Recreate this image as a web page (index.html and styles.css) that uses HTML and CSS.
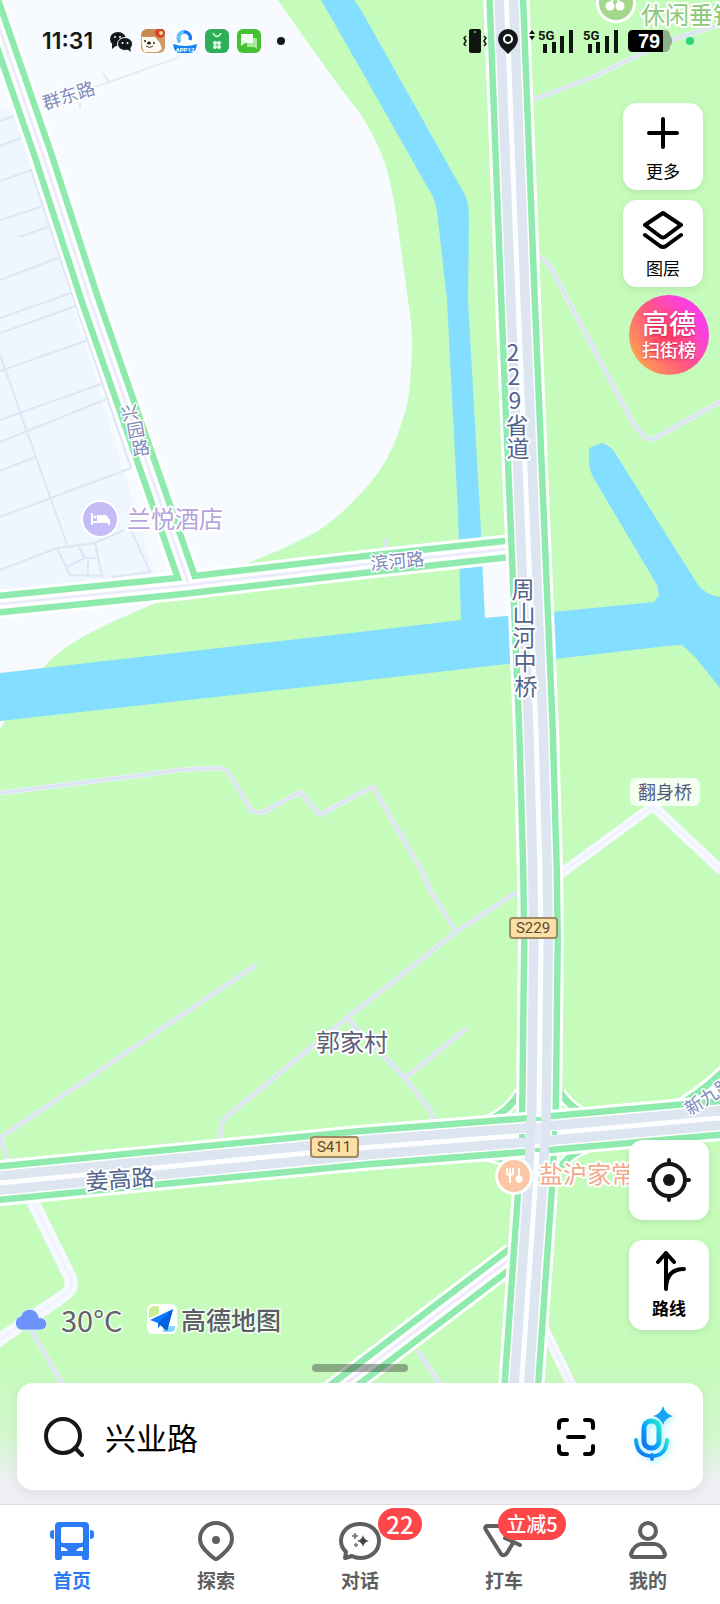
FILE: index.html
```html
<!DOCTYPE html>
<html lang="zh-CN">
<head>
<meta charset="utf-8">
<meta name="viewport" content="width=device-width, initial-scale=1">
<title>高德地图</title>
<link rel="stylesheet" href="styles.css">
</head>
<body>
<div class="screen">
  <main class="map-view">
    <svg class="map" viewBox="0 0 720 1504" preserveAspectRatio="xMidYMin slice" role="img" aria-label="地图">
      <defs>
        <path id="r229" d="M506 -10 L518 300 L536 730 L540 870 L541 940 L539 1110 L535 1190 L521 1390 L518 1510"/>
        <path id="r411" d="M-10 1184 L360 1148 L540 1134 L730 1117"/>
        <path id="rxy" d="M-14 -10 L43 155 L90 300 L188 582"/>
        <path id="rbh" d="M-10 605 L180 586 L360 565 L507 549"/>
        <path id="rsw" d="M514 1256 L360 1373 L290 1426"/>
        <path id="rxj" d="M672 1118 Q704 1102 732 1074"/>
      </defs>
      <rect width="720" height="1504" class="land"/>
      <path class="town" d="M0 0H278Q336 84 360 113Q376 138 385 163Q393 190 397 220L408 300Q413 330 412 352Q410 400 404 415Q395 448 380 470Q368 487 356 498Q340 516 318 531Q285 549 250 562L163 600Q110 622 90 633Q58 650 43 668L0 674Z"/>
      <path class="town" d="M0 715H8L0 730ZM482 562H508V616L485 618Z"/>
      <path class="block" d="M0 110L14 112L155 574L0 592Z"/>
      <g class="lanes">
        <path d="M0 121L14 116M0 146L21 138M0 181L31 170L43 207L74 300L131 468M0 220L41 207M19 237L48 227M0 280L58 258M0 318L71 293M0 333L76 306M0 371L88 340M0 420L104 383M0 442L109 398M0 471L35 457M0 517L131 468M0 355L67 545M0 570L57 548L95 543L124 530M131 530L150 572L112 577M57 548L70 575L102 576L95 543M78 546L85 558H95M85 558L66 567M88 560V576"/>
        <path class="faint" d="M95 87L115 80L180 57M103 73L108 81M80 103V109"/>
      </g>
      <g class="water">
        <path d="M321 0H354L360 8L465 195Q469 204 469 217L468 300L480 513L485 622H461L458 513L447 300L438 220Q437 206 433 197L360 68Z"/>
        <path d="M0 673L360 632L461 620L553 612L654 602L659 595L657 585L593 477Q589 468 589 462V448L602 443Q611 446 615 453L698 585Q706 594 715 596L720 597V688L695 657L682 645L667 646L555 659L507 664L360 681L0 721Z"/>
      </g>
      <g class="path-case">
        <path d="M0 793L127 777L180 770L215 768Q225 768 228 772L251 810Q253 813 264 812L300 792L320 815L360 793L373 787L423 873L430 890L456 932"/>
        <path d="M517 892L456 932L347 1018L225 1118Q220 1124 220 1140M349 1020L405 1078L430 1110L434 1122M405 1078L467 1028"/>
        <path d="M256 965L0 1138L8 1160"/>
        <path d="M530 101L593 77L643 53L680 37L722 24"/>
        <path d="M538 256Q548 262 552 270L568 300L633 423L645 438Q648 440 655 438L722 401"/>
        <path d="M31 1330L66 1390M417 1350L444 1390"/>
      </g>
      <g class="path-line">
        <path d="M0 793L127 777L180 770L215 768Q225 768 228 772L251 810Q253 813 264 812L300 792L320 815L360 793L373 787L423 873L430 890L456 932"/>
        <path d="M517 892L456 932L347 1018L225 1118Q220 1124 220 1140M349 1020L405 1078L430 1110L434 1122M405 1078L467 1028"/>
        <path d="M256 965L0 1138L8 1160"/>
        <path d="M530 101L593 77L643 53L680 37L722 24"/>
        <path d="M538 256Q548 262 552 270L568 300L633 423L645 438Q648 440 655 438L722 401"/>
        <path d="M31 1330L66 1390M417 1350L444 1390"/>
      </g>
      <g class="street">
        <path d="M560 874L653 806L722 871M540 1320L574 1390"/>
        <path class="street-wide" d="M30 1196L70 1277Q74 1287 66 1294L-4 1342"/>
      </g>
      <g class="street-mid">
        <path d="M560 874L653 806L722 871M540 1320L574 1390M30 1196L70 1277Q74 1287 66 1294L-4 1342"/>
      </g>
      <path d="M385 538v12" class="tick"/>
      <g class="ramp-case"><path d="M480 1123Q506 1116 520 1092M560 1092Q572 1112 598 1118M598 1144Q572 1150 560 1168M480 1154Q500 1158 515 1164"/></g>
      <g class="ramp"><path d="M480 1123Q506 1116 520 1092M560 1092Q572 1112 598 1118M598 1144Q572 1150 560 1168M480 1154Q500 1158 515 1164"/></g>
      <g class="mid-road">
        <use href="#rsw" class="w1"/><use href="#rsw" class="w2"/><use href="#rsw" class="w3"/><use href="#rsw" class="w4"/>
        <use href="#rxj" class="w1"/><use href="#rxj" class="w2"/><use href="#rxj" class="w3"/>
        <use href="#rbh" class="w1"/><use href="#rxy" class="w1"/>
        <use href="#rbh" class="w2"/><use href="#rxy" class="w2"/>
        <use href="#rbh" class="w3"/><use href="#rxy" class="w3"/>
        <use href="#rbh" class="w4"/><use href="#rxy" class="w4"/>
      </g>
      <g class="big-road">
        <use href="#r229" class="b1"/><use href="#r229" class="b2"/><use href="#r229" class="b3"/>
        <use href="#r411" class="b1"/><use href="#r411" class="b2"/><use href="#r411" class="b3"/>
        <use href="#r411" class="b4"/><use href="#r411" class="b5"/>
        <use href="#r229" class="b4"/><use href="#r229" class="b5"/>
        <path class="cross" d="M538 1123V1144"/>
        <path class="patch" d="M519 1136H525M552 1133H557M536 1119H541M535 1150H540"/>
      </g>

      <g class="label road-label">
        <text transform="translate(45 110) rotate(-18)">群东路</text>
        <text x="122 128 133" y="421 438 456" rotate="-10">兴园路</text>
        <text transform="translate(371 570) rotate(-5)">滨河路</text>
        <text transform="translate(690 1116) rotate(-33)">新九路</text>
      </g>
      <g class="label main-label">
        <text text-anchor="middle" x="513 514 515 517 518" y="361 385 409 434 457">229省道</text>
        <text text-anchor="middle" x="523 524 524 525 526" y="598 622 646 670 695">周山河中桥</text>
        <text transform="translate(86 1190) rotate(-4)">姜高路</text>
      </g>
      <g class="label poi-label">
        <text class="hotel" x="127" y="528">兰悦酒店</text>
        <text class="food" x="539" y="1183">盐沪家常菜</text>
        <text class="park" x="641" y="24">休闲垂钓</text>
        <text class="village" x="316" y="1051">郭家村</text>
      </g>
      <rect x="630" y="778" width="70" height="28" rx="6" class="tag"/>
      <text x="665" y="799" text-anchor="middle" class="tag-text">翻身桥</text>
      <g class="shield">
        <rect x="510" y="918" width="47" height="20" rx="3"/><text x="533" y="933" text-anchor="middle">S229</text>
        <rect x="311" y="1137" width="47" height="20" rx="3"/><text x="334" y="1152" text-anchor="middle">S411</text>
      </g>
      <g>
        <circle cx="100" cy="519" r="19" fill="#fff"/><circle cx="100" cy="519" r="17" fill="#c3bcf6"/>
        <path d="M92 513V525M92 522H109V525M109 522V519" stroke="#fff" stroke-width="2" fill="none"/>
        <path d="M97 515H105Q109 516 109 521H97Z" fill="#fff"/><circle cx="95" cy="517" r="1.500" fill="#fff"/>
        <circle cx="514" cy="1176" r="19" fill="#fff"/><circle cx="514" cy="1176" r="16" fill="#fbc7a4"/>
        <path d="M507 1168V1173Q507 1175 510 1175Q513 1175 513 1173V1168M510 1168V1183M519 1168V1183" stroke="#fff" stroke-width="2" fill="none"/>
        <circle cx="519" cy="1179" r="3.500" fill="#fff"/>
        <circle cx="616" cy="3" r="20" fill="#fff"/><circle cx="616" cy="3" r="17" fill="#a3d78c"/>
        <circle cx="610" cy="6" r="4.500" fill="#fff"/><circle cx="620" cy="6" r="4.500" fill="#fff"/>
        <path d="M611 3L615 -4L620 3" stroke="#fff" stroke-width="2" fill="none"/>
      </g>
    </svg>
    <div class="map-fade"></div>

    <header class="status">
      <div class="status-left">
        <time class="clock">11:31</time>
        <div class="notices">
          <svg width="24" height="24" viewBox="0 0 24 24"><ellipse cx="9" cy="10" rx="8" ry="7" fill="#15181b"/><path d="M3 15L3 20L8 16Z" fill="#15181b"/><ellipse cx="16" cy="15" rx="7.500" ry="6.500" fill="#15181b" stroke="#f6faff"/><path d="M18 20L22 23L21 18Z" fill="#15181b"/><circle cx="6" cy="8" r="1" fill="#fff"/><circle cx="11" cy="8" r="1" fill="#fff"/><circle cx="13.500" cy="14" r="1" fill="#fff"/><circle cx="18.500" cy="14" r="1" fill="#fff"/></svg>
          <svg width="24" height="24" viewBox="0 0 24 24"><rect width="24" height="24" rx="6" fill="#cf9a68"/><path d="M0 8H14L19 14L21 20L17 23H3Q0 16 1 9Z" fill="#fff9ef"/><path d="M1 8Q-1 2 6 0H15L14 7Z" fill="#c98a52"/><circle cx="19" cy="4" r="5" fill="#d8442c"/><circle cx="20" cy="4" r="2" fill="#f8d6a0"/><circle cx="4" cy="12" r="1" fill="#222"/><circle cx="13" cy="14" r="1" fill="#222"/><ellipse cx="8" cy="14" rx="2" ry="1.500" fill="#222"/><path d="M5 17Q9 20 12 17" stroke="#333" fill="none"/></svg>
          <svg width="24" height="24" viewBox="0 0 24 24"><rect width="24" height="24" rx="6" fill="#fff"/><path d="M7 13A6 6 0 1 1 17 11" fill="none" stroke="#1b7cf2" stroke-width="3.500"/><path d="M7 13A6 6 0 0 1 11 3" fill="none" stroke="#5fc4ff" stroke-width="3.500"/><path d="M0 15Q12 19 24 15Q23 24 17 24H7Q1 24 0 15Z" fill="#1583f3"/><text x="12" y="23" text-anchor="middle" class="tiny">APP12</text></svg>
          <svg width="24" height="24" viewBox="0 0 24 24"><rect width="24" height="24" rx="6" fill="#2fae58"/><path d="M8 4Q12 11 16 4" stroke="#d9ffe0" stroke-width="1.500" fill="none"/><g fill="#e4ffe9"><circle cx="10" cy="14" r="2"/><circle cx="14" cy="14" r="2"/><circle cx="10" cy="18" r="2"/><circle cx="14" cy="18" r="2"/></g></svg>
          <svg width="24" height="24" viewBox="0 0 24 24"><rect width="24" height="24" rx="6" fill="#45c232"/><path d="M10 9H20V20L17 18H10Z" fill="#a9e79c"/><path d="M4 5H16V14H8L4 17Z" fill="#f0fff0"/></svg>
        </div>
        <span class="dot dark"></span>
      </div>
      <div class="status-right">
        <svg width="24" height="24" viewBox="0 0 24 24"><rect x="6" y="0" width="12" height="24" rx="2" fill="#10150f"/><circle cx="12" cy="3" r="1" fill="#9c9"/><path d="M3 7L1 9L3 12L1 15L3 17M21 7L23 9L21 12L23 15L21 17" stroke="#10150f" stroke-width="1.500" fill="none"/></svg>
        <svg width="22" height="26" viewBox="0 0 22 26"><path d="M11 26L4 19Q1 15 1 11A10 10 0 0 1 21 11Q21 15 18 19Z" fill="#15181b"/><circle cx="11" cy="11" r="4" fill="none" stroke="#fff" stroke-width="2"/></svg>
        <svg width="44" height="26" viewBox="0 0 44 26"><path d="M0 6L3 2L6 6ZM0 8L3 12L6 8Z" fill="#10150f"/><text x="9" y="12" class="net">5G</text><path d="M16 16V25M25 14V25M33 8V25M42 2V25" stroke="#10150f" stroke-width="4"/></svg>
        <svg width="35" height="26" viewBox="0 0 35 26"><text x="0" y="12" class="net">5G</text><path d="M7 16V25M15 14V25M24 8V25M33 2V25" stroke="#10150f" stroke-width="4"/></svg>
        <svg width="44" height="24" viewBox="0 0 44 24"><path d="M34 1H37Q42 1 42 7Q44 8 44 12Q44 16 42 17Q42 23 37 23H34Z" fill="#8fae8a"/><path d="M5 1H35V23H5Q0 23 0 18V6Q0 1 5 1Z" fill="#000"/><text x="21" y="19" text-anchor="middle" class="charge">79</text></svg>
        <span class="dot green"></span>
      </div>
    </header>

    <div class="tools">
      <button class="tool" type="button">
        <svg width="40" height="40" viewBox="0 0 40 40"><path d="M20 6V34M6 20H34" stroke="#000" stroke-width="4" stroke-linecap="round"/></svg>
        <span>更多</span>
      </button>
      <button class="tool" type="button">
        <svg width="40" height="40" viewBox="0 0 40 40" fill="none" stroke="#000" stroke-width="4" stroke-linejoin="round" stroke-linecap="round"><path d="M20 3L38 15L22 27Q20 28 18 27L2 15Z"/><path d="M2 25L17 36Q20 38 23 36L38 25"/></svg>
        <span>图层</span>
      </button>
      <button class="rank" type="button"><span class="rank-top">高德</span><span class="rank-sub">扫街榜</span></button>
    </div>

    <div class="lower">
      <div class="info">
        <svg width="32" height="24" viewBox="0 0 32 24"><path d="M8 23A7 7 0 0 1 5 9A9 9 0 0 1 22 8Q23 9 23 11A6 6 0 0 1 26 23Z" fill="#6c92fb" stroke="#d9f0f0"/></svg>
        <span class="temp">30°C</span>
        <svg class="logo" width="30" height="30" viewBox="0 0 30 30"><rect width="30" height="30" rx="6" fill="#fff"/><path d="M2 8Q2 2 8 2H12V10L2 14Z" fill="#c8ee9a"/><path d="M16 22H28V24Q28 28 23 28H16Z" fill="#86d7ff"/><path d="M3 16L26 5L20 27L14 21L11 24V19Z" fill="#0a7cff"/><path d="M26 5L11 19L20 27Z" fill="#0560e0"/></svg>
        <span class="brand">高德地图</span>
      </div>
      <div class="actions">
        <button class="tool locate" type="button" aria-label="定位">
          <svg width="44" height="44" viewBox="0 0 44 44" fill="none" stroke="#15181b" stroke-width="4" stroke-linecap="round"><circle cx="22" cy="22" r="16"/><circle cx="22" cy="22" r="6" fill="#15181b" stroke="none"/><path d="M22 2V6M22 38V42M2 22H6M38 22H42"/></svg>
        </button>
        <button class="tool route" type="button">
          <svg width="40" height="42" viewBox="0 0 40 42" fill="none" stroke="#000" stroke-width="4" stroke-linecap="round" stroke-linejoin="round"><path d="M17 3V39M9 12L17 3L25 12M17 39Q17 19 35 19"/></svg>
          <span>路线</span>
        </button>
      </div>
    </div>
    <div class="handle"></div>
    <form class="search">
      <svg width="40" height="42" viewBox="0 0 40 42" fill="none" stroke="#15181b" stroke-width="4" stroke-linecap="round"><circle cx="19" cy="20" r="17"/><path d="M31 32L38 39"/></svg>
      <input type="text" aria-label="搜索地点" value="兴业路">
      <button class="icon-btn" type="button" aria-label="扫一扫">
        <svg width="38" height="38" viewBox="0 0 38 38" fill="none" stroke="#000" stroke-width="4" stroke-linecap="round"><path d="M2 10V6Q2 2 6 2H10M28 2H32Q36 2 36 6V10M36 28V32Q36 36 32 36H28M10 36H6Q2 36 2 32V28M11 19H27"/></svg>
      </button>
      <button class="icon-btn" type="button" aria-label="语音">
        <svg class="mic" width="42" height="56" viewBox="0 0 42 56"><defs><linearGradient id="mg" x1="0" y1="1" x2="1" y2="0"><stop offset="0" stop-color="#1766f0"/><stop offset=".5" stop-color="#0aaef8"/><stop offset="1" stop-color="#22e8d0"/></linearGradient></defs><rect x="11" y="15" width="15" height="27" rx="7" fill="none" stroke="url(#mg)" stroke-width="5"/><path d="M3 34Q4 50 19 50Q33 50 34 34" fill="none" stroke="url(#mg)" stroke-width="4" stroke-linecap="round"/><path d="M19 49V53" stroke="#138ff5" stroke-width="4" stroke-linecap="round"/><path d="M30 0Q32 8 40 10Q32 12 30 19Q28 12 20 10Q28 8 30 0Z" fill="#16a4f2"/></svg>
      </button>
    </form>
  </main>

  <nav class="tabs">
    <a href="#home" class="tab active">
      <svg width="44" height="40" viewBox="0 0 44 40"><path fill-rule="evenodd" fill="#2b7bf6" d="M9 1H35Q39 1 39 5V37Q39 39 37 39H34Q32 39 32 37V35H12V37Q12 39 10 39H7Q5 39 5 37V5Q5 1 9 1ZM13 6Q11 6 11 8V20Q11 22 13 22H31Q33 22 33 20V8Q33 6 31 6ZM11 26V30H18Q16 26 11 26ZM33 26V30H26Q28 26 33 26Z"/><path d="M4 9V18Q0 18 0 15V12Q0 9 4 9ZM40 9V18Q44 18 44 15V12Q44 9 40 9Z" fill="#2b7bf6"/></svg>
      <span>首页</span>
    </a>
    <a href="#explore" class="tab">
      <svg width="40" height="40" viewBox="0 0 40 40"><path d="M20 38Q18 38 12 32Q4 25 4 18A16 16 0 0 1 36 18Q36 25 28 32Q22 38 20 38Z" fill="none" stroke="#5f5f5f" stroke-width="4"/><circle cx="20" cy="19" r="4" fill="#5f5f5f"/></svg>
      <span>探索</span>
    </a>
    <a href="#chat" class="tab">
      <svg width="44" height="40" viewBox="0 0 44 40"><path d="M22 3C33 3 41 10 41 20S33 37 22 37Q18 37 14 35L7 37L8 31Q3 26 3 20C3 10 11 3 22 3Z" fill="none" stroke="#5f5f5f" stroke-width="4" stroke-linejoin="round"/><path d="M25 14Q26 19 31 20Q26 21 25 26Q24 21 19 20Q24 19 25 14Z" fill="#444"/><path d="M17 12Q17 15 20 15Q17 15 17 18Q17 15 14 15Q17 15 17 12ZM18 22Q18 24 20 24Q18 24 18 26Q18 24 16 24Q18 24 18 22Z" fill="#777" stroke="#777"/></svg>
      <span>对话</span><b class="badge count">22</b>
    </a>
    <a href="#taxi" class="tab">
      <svg width="44" height="40" viewBox="0 0 44 40" fill="none" stroke="#5f5f5f" stroke-width="4" stroke-linecap="round" stroke-linejoin="round"><path d="M33 5H5Q2 6 4 9L19 33Q22 36 25 32L31 22M23 17L38 24"/></svg>
      <span>打车</span><b class="badge promo">立减5</b>
    </a>
    <a href="#mine" class="tab">
      <svg width="40" height="40" viewBox="0 0 40 40" fill="none" stroke="#5f5f5f" stroke-width="4"><circle cx="20" cy="10" r="8"/><path d="M13 23H27Q34 24 37 33Q37 36 34 36H6Q3 36 3 33Q6 24 13 23Z"/></svg>
      <span>我的</span>
    </a>
  </nav>
</div>
</body>
</html>
```
FILE: styles.css
```css
* { box-sizing: border-box; }
body {
  margin: 0;
  font-family: "Noto Sans CJK SC", "Noto Sans", sans-serif;
  color: #15181b;
}
button { border: 0; padding: 0; font: inherit; color: inherit; cursor: pointer; }
svg { display: block; flex: none; }

.screen { min-height: 100vh; display: flex; flex-direction: column; background: #fff; }
.map-view { position: relative; flex: 1; display: flex; flex-direction: column; isolation: isolate; }
.map { position: absolute; inset: 0; width: 100%; height: 100%; z-index: -2; }
.map-fade {
  position: absolute; left: 0; right: 0; bottom: 0; height: 140px; z-index: -1;
  background: linear-gradient(rgba(241, 239, 243, 0), rgba(241, 239, 243, 0.3) 50%, #f1eff3 86%);
}

/* map surfaces */
.land { fill: #c5fbbb; }
.town { fill: #f7faff; }
.block { fill: #eef6ff; }
.water { fill: #84deff; }
.lanes { fill: none; stroke: #dde6f2; stroke-width: 2; }
.faint { stroke: #e6ebf3; }
.tick { stroke: #dde6f2; stroke-width: 4; }
.path-case { fill: none; stroke: #e6eef8; stroke-width: 5; stroke-linejoin: round; }
.path-line { fill: none; stroke: #dce5f0; stroke-width: 3; stroke-linejoin: round; }
.street { fill: none; stroke: #f5f8ff; stroke-width: 10; }
.street-wide { stroke-width: 13; }
.street-mid { fill: none; stroke: #ebe8fb; stroke-width: 1; }
.ramp-case { fill: none; stroke: #fff; stroke-width: 12; }
.ramp { fill: none; stroke: #8eebad; stroke-width: 7; }
.mid-road, .big-road { fill: none; }
.w1 { stroke: #fff; stroke-width: 29px; }
.w2 { stroke: #8eebad; stroke-width: 23px; }
.w3 { stroke: #fff; stroke-width: 10px; }
.w4 { stroke: #ececfa; stroke-width: 3px; }
.b1 { stroke: #fff; stroke-width: 46px; }
.b2 { stroke: #8eebad; stroke-width: 40px; }
.b3 { stroke: #fff; stroke-width: 27px; }
.b4 { stroke: #dde5f0; stroke-width: 24px; }
.b5 { stroke: #fbfdff; stroke-width: 5px; }
.cross { stroke: #e3eaf3; stroke-width: 6px; }
.patch { stroke: #8eebad; stroke-width: 4px; }

/* map labels */
.label { paint-order: stroke; stroke: #fff; stroke-width: 4px; stroke-linejoin: round; }
.road-label { font-size: 18px; fill: #7f8bb8; stroke-width: 3px; }
.main-label { font-size: 23px; fill: #53648c; }
.poi-label { font-size: 24px; }
.hotel { fill: #b5a4dc; }
.food { fill: #f2a98c; }
.park { fill: #8cc97a; }
.village { fill: #5c5e74; }
.tag { fill: #fff; fill-opacity: 0.8; }
.tag-text { font-size: 18px; fill: #53597c; }
.shield rect { fill: #fbdfa6; stroke: #a08a66; stroke-width: 2px; }
.shield text { font: 400 15px Roboto, sans-serif; fill: #5c4a32; }

/* status bar */
.status { display: flex; justify-content: space-between; height: 60px; padding: 22px 26px 0 42px; }
.status-left, .status-right { display: flex; align-items: center; }
.clock { width: 67px; font: 600 23px/38px Inter, sans-serif; }
.notices { display: flex; gap: 8px; }
.status-right { gap: 10px; }
.dot { width: 8px; height: 8px; border-radius: 50%; }
.dot.dark { margin-left: 16px; background: #15181b; }
.dot.green { margin-left: 4px; background: #2bd477; }
.tiny { font: 700 6px Roboto, sans-serif; fill: #fff; }
.net { font: 700 13px Roboto, sans-serif; fill: #10150f; }
.charge { font: 700 20px "Liberation Sans", sans-serif; fill: #fff; }

/* floating controls */
.tools { display: flex; flex-direction: column; align-items: flex-end; gap: 10px; margin-top: 43px; padding-right: 17px; }
.tool {
  display: flex; flex-direction: column; align-items: center; gap: 6px;
  width: 80px; height: 87px; padding-top: 10px;
  border-radius: 14px; background: #fff; color: #000;
  box-shadow: 0 2px 6px rgba(60, 110, 60, 0.15);
  font-size: 17px; line-height: 24px;
}
.rank {
  display: flex; flex-direction: column; align-items: center;
  width: 80px; height: 80px; margin: -2px -6px 0 0; padding-top: 13px; border-radius: 50%;
  background: radial-gradient(circle at 50% 50%, rgba(255, 50, 90, 0.8), rgba(255, 50, 120, 0) 55%),
    linear-gradient(55deg, #ffa54a 10%, #ff5a80 45%, #fc3fe0 78%);
  color: #fff; text-shadow: 0 1px 2px rgba(150, 0, 60, 0.5);
}
.rank-top { font-size: 27px; font-weight: 500; line-height: 29px; }
.rank-sub { font-size: 18px; font-weight: 500; line-height: 24px; }

.lower { display: flex; justify-content: space-between; align-items: flex-end; margin-top: auto; padding: 0 11px 0 16px; }
.info { display: flex; align-items: center; height: 34px; }
.temp { margin-left: 13px; width: 86px; font-size: 29px; line-height: 32px; color: #62626a; }
.logo { margin-right: 4px; }
.brand { font-size: 25px; font-weight: 500; line-height: 32px; color: #5c5c64; }
.temp, .brand { paint-order: stroke; -webkit-text-stroke: 3px #f2fff0; }
.actions { display: flex; flex-direction: column; gap: 20px; margin-bottom: 6px; }
.locate { height: 80px; padding: 0; justify-content: center; }
.route { height: 90px; gap: 4px; font-weight: 700; }
.handle { width: 96px; height: 8px; margin: 28px auto 11px; border-radius: 4px; background: rgba(60, 70, 60, 0.45); }

.search {
  display: flex; align-items: center; height: 107px; margin: 0 17px 14px; padding: 0 28px 0 27px;
  border-radius: 16px; background: #fff; box-shadow: 0 4px 14px rgba(90, 100, 120, 0.1);
}
.search input {
  flex: 1; min-width: 0; margin-left: 21px; padding: 0; border: 0; outline: 0; background: none;
  font-family: inherit; font-size: 31px; line-height: 44px; color: #000;
}
.icon-btn { background: none; }
.icon-btn + .icon-btn { margin-left: 38px; }
.mic { margin-bottom: 6px; filter: drop-shadow(2px 2px 3px rgba(40, 220, 255, 0.4)); }

/* bottom tabs */
.tabs { display: grid; grid-template-columns: repeat(5, 1fr); height: 100px; border-top: 1px solid #dcdbe0; background: #fff; }
.tab {
  position: relative; display: flex; flex-direction: column; align-items: center; gap: 5px; padding-top: 16px;
  color: #5f5f5f; text-decoration: none; font-size: 19px; font-weight: 700; line-height: 28px;
}
.tab.active { color: #2b7bf6; }
.badge {
  position: absolute; top: 3px; left: 50%; height: 32px; border-radius: 16px;
  background: #ff4648; color: #fff; text-align: center; font-weight: 500; line-height: 32px;
}
.count { width: 44px; margin-left: 18px; font-size: 24px; }
.promo { width: 68px; margin-left: -6px; font-size: 20px; }
```
